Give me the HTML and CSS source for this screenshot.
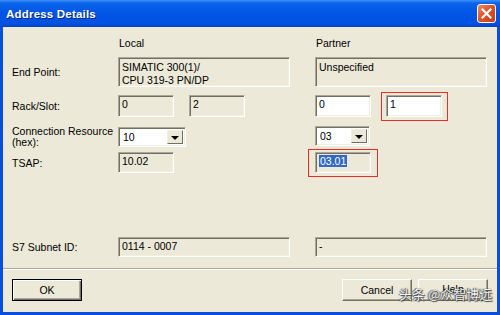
FILE: index.html
```html
<!DOCTYPE html>
<html lang="en">
<head>
    <meta charset="UTF-8">
    <title>Address Details</title>
    <link rel="stylesheet" href="styles.css">
</head>
<body>

<div class="window">
    <div class="titlebar">
        <span class="title">Address Details</span>
        <span class="close-btn">
            <svg width="11" height="11" viewBox="0 0 11 11">
                <path d="M1.5 1.5 L9.5 9.5 M9.5 1.5 L1.5 9.5" stroke="#fff" stroke-width="2.2" stroke-linecap="square"/>
            </svg>
        </span>
    </div>

    <div class="frame">
        <div class="form">
            <div class="row head">
                <span></span>
                <span class="col-title">Local</span>
                <span class="col-title">Partner</span>
            </div>

            <div class="row endpoint">
                <label>End Point:</label>
                <div class="field ro wide tall">SIMATIC 300(1)/<br>CPU 319-3 PN/DP</div>
                <div class="field ro wide tall">Unspecified</div>
            </div>

            <div class="row rack">
                <label>Rack/Slot:</label>
                <div class="pair">
                    <div class="field ro small">0</div>
                    <div class="field ro small">2</div>
                </div>
                <div class="pair">
                    <div class="field small">0</div>
                    <div class="field small marked mark-slot">1</div>
                </div>
            </div>

            <div class="row conn">
                <label class="two-line">Connection Resource<br>(hex):</label>
                <div class="combo combo-local">
                    <span class="combo-value">10</span>
                    <span class="combo-btn"><span class="arrow"></span></span>
                </div>
                <div class="combo combo-partner">
                    <span class="combo-value">03</span>
                    <span class="combo-btn"><span class="arrow"></span></span>
                </div>
            </div>

            <div class="row tsap">
                <label>TSAP:</label>
                <div class="field ro small">10.02</div>
                <div class="field ro small marked mark-tsap"><span class="selected">03.01</span></div>
            </div>

            <div class="row subnet">
                <label>S7 Subnet ID:</label>
                <div class="field ro wide">0114 - 0007</div>
                <div class="field ro wide">-</div>
            </div>
        </div>

        <div class="separator"></div>

        <div class="buttons">
            <button class="btn default">OK</button>
            <div class="btn-group">
                <button class="btn">Cancel</button>
                <button class="btn help">Help</button>
            </div>
        </div>
    </div>

    <div class="watermark">头条 @众智博远</div>
</div>

</body>
</html>
```

FILE: styles.css
```css
body {
    margin: 0;
    font-family: "Liberation Sans", Arial, sans-serif;
    font-size: 10.5px;
    color: #000;
}
.window {
    position: relative;
    width: 500px;
    height: 315px;
    display: flex;
    flex-direction: column;
    background: #0a4fdc;
}
.titlebar {
    height: 27px;
    flex: none;
    display: flex;
    align-items: center;
    justify-content: space-between;
    padding: 0 4px 0 6px;
    background: linear-gradient(to bottom, #3d8ff9 0%, #0a63ea 12%, #0055e5 50%, #0052e0 88%, #0040c4 100%);
}
.title {
    color: #fff;
    font-weight: bold;
    font-size: 11.5px;
    text-shadow: 1px 1px #0a2a80;
    letter-spacing: 0.2px;
}
.close-btn {
    width: 19px;
    height: 19px;
    box-sizing: border-box;
    border: 1px solid #fff;
    border-radius: 3px;
    background: linear-gradient(135deg, #f08a63 0%, #e0522a 45%, #c63c12 100%);
    display: flex;
    align-items: center;
    justify-content: center;
}
.frame {
    flex: 1;
    margin: 0 3px 3px 3px;
    background: #ece9d8;
    display: flex;
    flex-direction: column;
}
.form {
    padding: 8px 0 0 9px;
}
.row {
    display: grid;
    grid-template-columns: 81px 172px 172px;
    column-gap: 25px;
    align-items: center;
}
.head {
    height: 15px;
}
.col-title {
    padding-left: 1px;
}
.endpoint {
    margin-top: 7px;
}
.rack {
    margin-top: 8px;
}
.conn {
    margin-top: 9px;
    height: 20px;
}
.tsap {
    margin-top: 6px;
}
.subnet {
    margin-top: 64px;
}
label {
    display: block;
    white-space: nowrap;
}
.two-line {
    line-height: 11px;
}
.field {
    box-sizing: border-box;
    height: 21px;
    padding: 2px 0 0 3px;
    border: 1px solid;
    border-color: #aca899 #fff #fff #aca899;
    box-shadow: inset 1px 1px #716f64, inset -1px -1px #f1efe2;
    background: #fff;
    line-height: 13px;
    white-space: nowrap;
}
.field.ro {
    background: #ece9d8;
}
.wide {
    width: 172px;
    height: 20px;
}
.tall {
    height: 30px;
    padding-top: 3px;
}
.small {
    width: 56px;
    height: 22px;
}
.tsap .small {
    height: 21px;
}
.pair {
    display: flex;
    gap: 15px;
}
.marked {
    position: relative;
}
.marked::after {
    content: "";
    position: absolute;
    border: 1px solid #ee2a2a;
}
.mark-slot::after {
    top: -4px;
    bottom: -5px;
    left: -6px;
    right: -7px;
}
.mark-tsap::after {
    top: -4px;
    bottom: -5px;
    left: -8px;
    right: -8px;
}
.selected {
    background: #316ac5;
    color: #fff;
    padding: 0 1px;
}
.combo {
    box-sizing: border-box;
    height: 20px;
    display: flex;
    align-items: stretch;
    border: 1px solid;
    border-color: #aca899 #fff #fff #aca899;
    box-shadow: inset 1px 1px #716f64, inset -1px -1px #f1efe2;
    background: #fff;
    padding: 2px;
}
.combo-local {
    width: 68px;
}
.combo-partner {
    width: 55px;
    margin-top: -2px;
}
.combo-value {
    flex: 1;
    padding: 1px 0 0 2px;
}
.combo-btn {
    width: 16px;
    box-sizing: border-box;
    background: #ece9d8;
    border: 1px solid;
    border-color: #f1efe2 #716f64 #716f64 #f1efe2;
    display: flex;
    align-items: center;
    justify-content: center;
}
.arrow {
    width: 0;
    height: 0;
    border-left: 4px solid transparent;
    border-right: 4px solid transparent;
    border-top: 4px solid #000;
    margin-top: 1px;
}
.separator {
    margin-top: 11px;
    height: 1px;
    border-top: 1px solid #aca899;
    background: #fff;
}
.buttons {
    display: flex;
    justify-content: space-between;
    padding: 9px 9px 0 9px;
}
.btn-group {
    display: flex;
    gap: 6px;
}
.btn {
    box-sizing: border-box;
    width: 70px;
    height: 22px;
    font-family: "Liberation Sans", Arial, sans-serif;
    font-size: 10.5px;
    background: #ece9d8;
    border: 1px solid;
    border-color: #fff #716f64 #716f64 #fff;
    box-shadow: inset -1px -1px #aca899;
    padding: 0;
    color: #000;
}
.btn.help {
    padding-bottom: 3px;
}
.btn.default {
    border: 1px solid #000;
    box-shadow: inset 1px 1px #fff, inset -1px -1px #716f64, inset -2px -2px #aca899;
}
.watermark {
    position: absolute;
    left: 399px;
    top: 285px;
    font-family: "Noto Sans CJK SC", sans-serif;
    font-size: 13px;
    line-height: 18px;
    color: #f4f4f4;
    text-shadow: 0 0 1px #222, 1px 1px 1px #444, -1px 0 1px #555;
    white-space: nowrap;
}
```
